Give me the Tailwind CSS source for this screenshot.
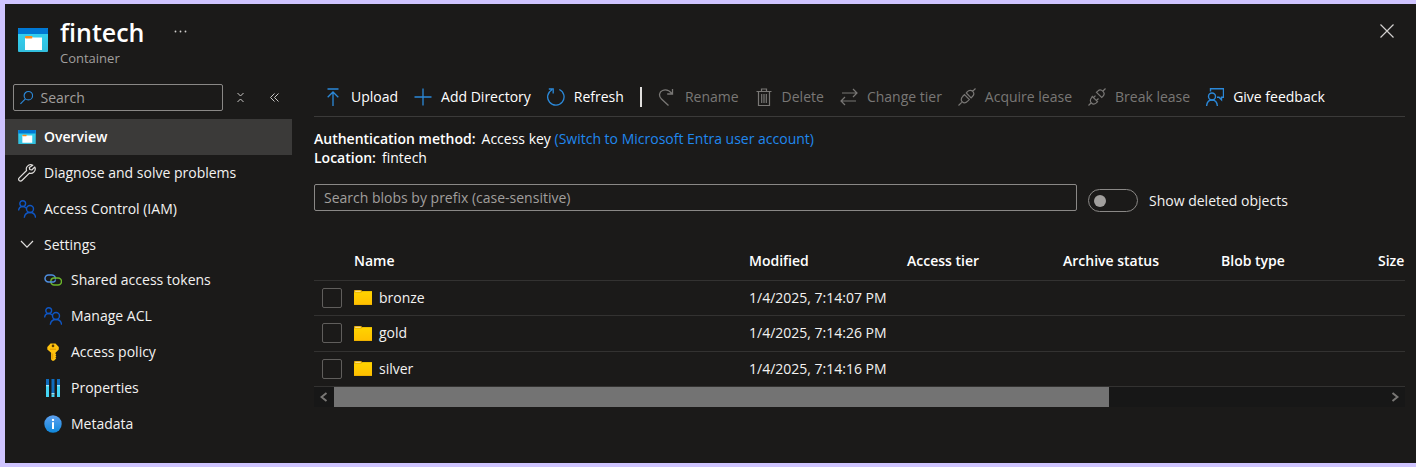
<!DOCTYPE html>
<html lang="en">
<head>
<meta charset="utf-8">
<meta name="viewport" content="width=device-width, initial-scale=1">
<title>fintech - Container</title>
<script src="https://cdn.jsdelivr.net/npm/@tailwindcss/browser@4"></script>
</head>
<body class="min-h-screen flex bg-[#cfc4ff] pt-1 pb-1 pl-[5px] font-['Open_Sans','Noto_Sans',sans-serif] text-sm leading-5 text-[#f3f2f1]">
<svg width="0" height="0" class="absolute" aria-hidden="true">
  <defs>
    <linearGradient id="cyan" x1="0" y1="0" x2="0" y2="1"><stop offset="0" stop-color="#32d4f5"/><stop offset="1" stop-color="#32bedd"/></linearGradient>
    <linearGradient id="yellow" x1="0" y1="0" x2="0" y2="1"><stop offset="0" stop-color="#ffd400"/><stop offset="1" stop-color="#ffc000"/></linearGradient>
    <linearGradient id="info" x1="0" y1="0" x2="0" y2="1"><stop offset="0" stop-color="#5ea0ef"/><stop offset="1" stop-color="#0f88dc"/></linearGradient>
    <symbol id="container" viewBox="0 0 30 24"><rect width="30" height="24" rx="1" fill="url(#cyan)"/><path d="M0 6V1a1 1 0 0 1 1-1h28a1 1 0 0 1 1 1v5z" fill="#0078d4"/><path d="M7 9h7.500l1 .5H24V22H7z" fill="#fff"/><rect x="7" y="8" width="7.500" height="2.600" rx="1" fill="#f78d1e"/></symbol>
    <symbol id="people" viewBox="0 0 18 18"><g fill="none" stroke="#0f56c4" stroke-width="1.400"><circle cx="4.700" cy="3.600" r="2.900"/><circle cx="12" cy="9" r="3.500"/><path d="M.6 10.500C.8 8 2.500 6.500 4.700 6.500c1.500 0 2.600.6 3.400 1.600M6.300 17.800c.3-3.200 2.700-5.300 5.700-5.300s5.300 2.100 5.600 5.300"/></g></symbol>
    <symbol id="folder" viewBox="0 0 18 15"><path d="M0 .8Q0 0 .8 0h6.400l1.200 1.200H18V15H0z" fill="#dfa500"/><path d="M0 2.600h7.200L8.600 1.200H18v13.200H0z" fill="url(#yellow)"/><rect x="1.200" y=".8" width="5.500" height="1" fill="#ffe9a0"/></symbol>
    <symbol id="plug" viewBox="0 0 18 18"><g fill="none" stroke="currentColor" stroke-width="1.200"><path d="M.5 17.500l3.200-3.200M14.300 3.700l3.200-3.200M6.500 6.700l4.800 4.800-1.600 1.700c-1.800 1.800-4 2-5.500.6s-1.200-3.700.6-5.500zM8.300 5l4.800 4.800 1.300-1.300c1.700-1.700 1.800-3.700.3-5.200S11 2 9.400 3.700z"/></g></symbol>
    <symbol id="unplug" viewBox="0 0 18 18"><g fill="none" stroke="currentColor" stroke-width="1.200"><path d="M.5 17.500l2.500-2.500M15 3l2.500-2.500M4.300 8.500l5.200 5.200-1.200 1.200c-1.500 1.400-3.500 1.500-4.900.1s-1.400-3.700.1-5.200zM8.500 4.300l5.200 5.200 1.200-1.200c1.500-1.500 1.500-3.500.1-4.900s-3.700-1.700-5.200-.3zM5.500 9.700l2-2M8.500 12.500l2-2"/></g></symbol>
  </defs>
</svg>
<div class="flex min-w-0 flex-1 flex-col bg-[#1b1a19]">
  <header class="flex h-[76px] items-start pt-3 pr-[14px] pl-[13px]">
    <svg class="mt-3 h-6 w-[30px]"><use href="#container"/></svg>
    <div class="ml-3">
      <h1 class="text-[25px] leading-8 font-semibold text-white">fintech</h1>
      <p class="text-[13px] leading-5 text-[#a19f9d]">Container</p>
    </div>
    <button type="button" aria-label="More actions" class="ml-[29px] pt-3"><svg width="14" height="6" fill="#d2d0ce"><circle cx="1.500" cy="3.500" r=".9"/><circle cx="6.500" cy="3.500" r=".9"/><circle cx="11.500" cy="3.500" r=".9"/></svg></button>
    <button type="button" aria-label="Close" class="ml-auto p-2"><svg width="14" height="14" viewBox="0 0 14 14" stroke="#d2d0ce" stroke-width="1.200"><path d="M.5.5l13 13M13.500.5l-13 13"/></svg></button>
  </header>
  <div class="flex flex-1">
    <aside class="w-[287px] shrink-0">
      <div class="flex h-[39px] items-start pt-1 pl-2">
        <label class="flex h-[27px] w-[210px] items-center rounded-xs border border-[#8a8886] pl-1.5">
          <svg width="15" height="15" viewBox="0 0 15 15" fill="none" stroke="#2b88d8" stroke-width="1.300"><circle cx="9.300" cy="5.500" r="4.700"/><path d="M6 9L.5 14.500"/></svg>
          <input type="search" aria-label="Search menu" placeholder="Search" class="ml-[7px] w-full bg-transparent outline-none placeholder:text-[#a19f9d]">
        </label>
        <button type="button" aria-label="Collapse groups" class="mt-2 ml-[13px]"><svg width="9" height="11" viewBox="0 0 9 11" fill="none" stroke="#c8c6c4" stroke-width="1"><path d="M1.500 1l3 3 3-3M1.500 10l3-3 3 3"/></svg></button>
        <button type="button" aria-label="Collapse menu" class="mt-2 ml-6"><svg width="11" height="11" viewBox="0 0 11 11" fill="none" stroke="#c8c6c4" stroke-width="1"><path d="M5.500 1.500l-4 4 4 4M9.500 1.500l-4 4 4 4"/></svg></button>
      </div>
      <nav aria-label="Container menu">
        <a href="#" aria-current="page" class="flex h-9 items-center gap-2 bg-[#3b3a39] pl-[13px] font-semibold text-white"><svg class="h-[14px] w-[18px]"><use href="#container"/></svg>Overview</a>
        <a href="#" class="flex h-9 items-center gap-2 pl-[13px]"><svg width="18" height="18" viewBox="0 0 18 18" fill="none" stroke="#e1dfdd" stroke-width="1.200" stroke-linejoin="round"><path d="M14.800 1.200c-1.800-.9-4-.5-5.300.9-1.200 1.200-1.500 2.900-.9 4.400L1.200 13.900a1.900 1.900 0 0 0 0 2.600 1.900 1.900 0 0 0 2.700 0l7.500-7.400c1.500.6 3.200.2 4.400-1 1.400-1.400 1.800-3.400 1-5.100l-3 3-2-.5-.5-2z"/></svg>Diagnose and solve problems</a>
        <a href="#" class="flex h-9 items-center gap-2 pl-[13px]"><svg class="size-[18px]"><use href="#people"/></svg>Access Control (IAM)</a>
        <button type="button" aria-expanded="true" class="flex h-[35px] w-full items-center gap-2 pl-[13px]"><svg width="18" height="18" viewBox="0 0 18 18" fill="none" stroke="#e1dfdd" stroke-width="1.200"><path d="M3 5l6 6.200L15 5"/></svg>Settings</button>
        <a href="#" class="flex h-9 items-center gap-[9px] pl-[39px]"><svg width="18" height="18" viewBox="0 0 18 18" fill="none" stroke-width="1.500"><path d="M6.500 11H4.500a3.500 3.500 0 0 1 0-7H8a3.500 3.500 0 0 1 3.300 4.500" stroke="#4f8fe0"/><path d="M7 9.200A3 3 0 0 1 10 7h4a3.500 3.500 0 0 1 0 7h-4a3.500 3.500 0 0 1-3-4.800z" stroke="#6bb52b"/><path d="M6 11h3.500c1 0 1.700-.8 1.900-1.800" stroke="#4f8fe0"/></svg>Shared access tokens</a>
        <a href="#" class="flex h-9 items-center gap-[9px] pl-[39px]"><svg class="size-[18px]"><use href="#people"/></svg>Manage ACL</a>
        <a href="#" class="flex h-9 items-center gap-[9px] pl-[39px]"><svg width="18" height="18" viewBox="0 0 18 18"><path d="M6.500.5h5L14.800 4v2.500l-3.300 3.300v1l.8.8-.8.9.9 1-1 1.100.8 1-2.200 2.200H8.300l-1.200-1.200V9.800L3.300 6.500V4z" fill="#ffc20e"/><circle cx="9" cy="2.900" r="1.300" fill="#5c3d00"/><path d="M6 6.200h6M8.700 10.500v5.500" stroke="#e59a00"/></svg>Access policy</a>
        <a href="#" class="flex h-9 items-center gap-[9px] pl-[39px]"><svg width="18" height="18" viewBox="0 0 18 18"><path d="M2 0h3v6H2zM7.500 0h3v14.500h-3zM13 0h3v6h-3z" fill="#0f6cbd"/><path d="M2 7h3v11H2zM7.500 15.500h3V18h-3zM13 7h3v11h-3z" fill="#45d6f5"/><path d="M2 6h3v1.300H2zM7.500 14h3v1.500h-3zM13 6h3v1.300h-3z" fill="#9fe6fa"/></svg>Properties</a>
        <a href="#" class="flex h-9 items-center gap-[9px] pl-[39px]"><svg width="18" height="18" viewBox="0 0 18 18"><circle cx="9" cy="9" r="8.700" fill="url(#info)"/><circle cx="9" cy="4.900" r="1.200" fill="#fff"/><path d="M8 7.300h2V14H8z" fill="#fff"/></svg>Metadata</a>
      </nav>
    </aside>
    <main class="min-w-0 flex-1 pr-[11px] pl-[22px]">
      <div role="toolbar" aria-label="Container commands" class="flex h-[37px] items-center gap-4 border-b border-[#3b3a39] pl-[10px] pb-0.5 whitespace-nowrap text-white">
        <button type="button" class="flex items-center gap-[9px]"><svg width="18" height="18" viewBox="0 0 18 18" fill="none" stroke="#2b88d8" stroke-width="1.300"><path d="M3.500 1h11M9 18V4M3.700 9.300L9 4l5.300 5.300"/></svg>Upload</button>
        <button type="button" class="flex items-center gap-[9px]"><svg width="18" height="18" viewBox="0 0 18 18" fill="none" stroke="#2b88d8" stroke-width="1.300"><path d="M9 .5v17M.5 9h17"/></svg>Add Directory</button>
        <button type="button" class="flex items-center gap-[9px]"><svg width="18" height="18" viewBox="0 0 18 18" fill="none" stroke="#2b88d8" stroke-width="1.300"><path d="M12.300 1.500A8.200 8.200 0 1 1 5 1.700M1.800 1h4.400v4.400"/></svg>Refresh</button>
        <span class="h-5 w-0.5 bg-[#e1dfdd]"></span>
        <button type="button" disabled class="flex items-center gap-[9px] text-[#797775]"><svg width="18" height="18" viewBox="0 0 18 18" fill="none" stroke="currentColor" stroke-width="1.300"><path d="M10.500 17.500L3.500 11C.3 8 1.300 3.800 4.500 2.500c3.600-1.500 7 .2 9.500 3M14.500 1v5H9.200"/></svg>Rename</button>
        <button type="button" disabled class="flex items-center gap-[9px] text-[#797775]"><svg width="18" height="18" viewBox="0 0 18 18" fill="none" stroke="currentColor" stroke-width="1.200"><path d="M1.500 3.500h15M3.500 3.500v14h11v-14M6.500 3V1h5v2M6.700 6v9M9 6v9M11.300 6v9"/></svg>Delete</button>
        <button type="button" disabled class="flex items-center gap-[9px] text-[#797775]"><svg width="18" height="18" viewBox="0 0 18 18" fill="none" stroke="currentColor" stroke-width="1.200"><path d="M2 5h15M13 1l4 4-4 4M16 13H1M5 9l-4 4 4 4"/></svg>Change tier</button>
        <button type="button" disabled class="flex items-center gap-[9px] text-[#797775]"><svg class="size-[18px]"><use href="#plug"/></svg>Acquire lease</button>
        <button type="button" disabled class="flex items-center gap-[9px] text-[#797775]"><svg class="size-[18px]"><use href="#unplug"/></svg>Break lease</button>
        <button type="button" class="flex items-center gap-[9px]"><svg width="18" height="18" viewBox="0 0 18 18" fill="none" stroke="#2b88d8" stroke-width="1.400"><circle cx="6" cy="8.500" r="3.500"/><path d="M.6 18c.3-3.500 2.500-6 5.400-6s5.100 2.500 5.400 6M4.500 3.500V.8h13v8.500h-2v2.500L13 9.300h-2"/></svg>Give feedback</button>
      </div>
      <div class="pt-3 leading-[19px] text-white">
        <p><strong class="mr-1.5 font-semibold">Authentication method:</strong>Access key <a href="#" class="text-[#2088ee]">(Switch to Microsoft Entra user account)</a></p>
        <p><strong class="mr-1.5 font-semibold">Location:</strong>fintech</p>
      </div>
      <div class="mt-[17px] flex items-start">
        <input type="text" aria-label="Search blobs by prefix" placeholder="Search blobs by prefix (case-sensitive)" class="h-[27px] min-w-0 flex-1 rounded-xs border border-[#8a8886] bg-transparent px-[9px] outline-none placeholder:text-[#a19f9d]">
        <label class="mt-[5px] ml-[11px] flex w-[317px] items-center gap-[11px]">
          <input type="checkbox" role="switch" class="flex h-[23px] w-[50px] appearance-none items-center rounded-full border border-[#8a8886] pl-[5px] before:size-3 before:rounded-full before:bg-[#a19f9d]">
          Show deleted objects
        </label>
      </div>
      <table class="mt-[31px] w-full table-fixed border-collapse text-left whitespace-nowrap">
        <colgroup><col class="w-10"><col><col class="w-[158px]"><col class="w-[156px]"><col class="w-[158px]"><col class="w-[157px]"><col class="w-[27px]"></colgroup>
        <thead>
          <tr class="h-[37px] border-b border-[#333231] text-white"><td></td><th class="font-semibold">Name</th><th class="font-semibold">Modified</th><th class="font-semibold">Access tier</th><th class="font-semibold">Archive status</th><th class="font-semibold">Blob type</th><th class="font-semibold">Size</th></tr>
        </thead>
        <tbody>
          <tr class="h-[35px] border-b border-[#333231]"><td class="pl-2"><input type="checkbox" aria-label="Select bronze" class="block size-5 appearance-none rounded-xs border border-[#605e5c]"></td><td><a href="#" class="flex items-center gap-[7px]"><svg class="h-[15px] w-[18px]"><use href="#folder"/></svg>bronze</a></td><td>1/4/2025, 7:14:07 PM</td><td></td><td></td><td></td><td></td></tr>
          <tr class="h-[36px] border-b border-[#333231]"><td class="pl-2"><input type="checkbox" aria-label="Select gold" class="block size-5 appearance-none rounded-xs border border-[#605e5c]"></td><td><a href="#" class="flex items-center gap-[7px]"><svg class="h-[15px] w-[18px]"><use href="#folder"/></svg>gold</a></td><td>1/4/2025, 7:14:26 PM</td><td></td><td></td><td></td><td></td></tr>
          <tr class="h-[35px] border-b border-[#333231]"><td class="pl-2"><input type="checkbox" aria-label="Select silver" class="block size-5 appearance-none rounded-xs border border-[#605e5c]"></td><td><a href="#" class="flex items-center gap-[7px]"><svg class="h-[15px] w-[18px]"><use href="#folder"/></svg>silver</a></td><td>1/4/2025, 7:14:16 PM</td><td></td><td></td><td></td><td></td></tr>
        </tbody>
      </table>
      <div class="flex h-5 bg-[#171717]">
        <button type="button" aria-label="Scroll left" class="flex w-5 items-center justify-center"><svg width="8" height="10" viewBox="0 0 8 10" fill="none" stroke="#797775" stroke-width="2"><path d="M6.500 1l-5 4 5 4"/></svg></button>
        <div class="flex-1"><div class="h-full w-[73.7%] bg-[#737373]"></div></div>
        <button type="button" aria-label="Scroll right" class="flex w-5 items-center justify-center"><svg width="8" height="10" viewBox="0 0 8 10" fill="none" stroke="#797775" stroke-width="2"><path d="M1.500 1l5 4-5 4"/></svg></button>
      </div>
    </main>
  </div>
</div>
</body>
</html>
